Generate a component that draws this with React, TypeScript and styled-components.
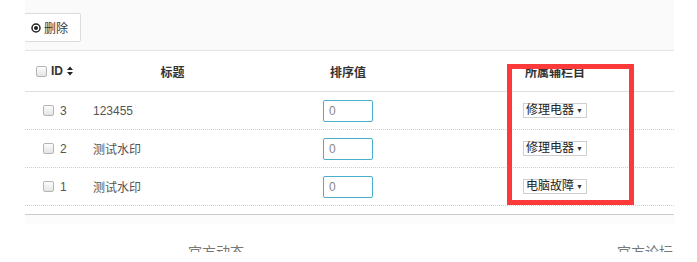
import React from 'react';
import styled, { createGlobalStyle } from 'styled-components';

const GlobalStyle = createGlobalStyle`
  body {
    margin: 0;
    background: #fff;
    font-family: "Liberation Sans", "Noto Sans CJK SC", sans-serif;
    color: #555;
  }
`;

const Page = styled.div`
  position: relative;
  width: 697px;
  height: 262px;
  overflow: hidden;
`;

const Panel = styled.div`
  margin: 0 23px 0 25px;
  overflow: hidden;
`;

const Toolbar = styled.div`
  height: 51px;
  background: #fafafa;
  border-bottom: 1px solid #e2e2e2;
  box-sizing: border-box;
  padding-top: 13px;
`;

const ActionButton = styled.button`
  display: flex;
  align-items: center;
  gap: 3px;
  margin-left: -1px;
  width: 57px;
  height: 29px;
  padding: 0 0 0 6px;
  background: #fff;
  border: 1px solid #dcdcdc;
  border-radius: 2px;
  font-family: inherit;
  font-size: 12px;
  color: #333;
`;

const columns = '60px 175px 176px 1fr';

const HeadRow = styled.div`
  display: grid;
  grid-template-columns: ${columns};
  height: 40px;
  align-items: center;
  border-bottom: 1px solid #dedede;
  font-size: 12px;
  font-weight: bold;
  color: #333;
`;

const HeadCell = styled.div<{ $pad?: number }>`
  display: flex;
  align-items: center;
  justify-content: ${p => (p.$pad !== undefined ? 'flex-start' : 'center')};
  padding-left: ${p => p.$pad ?? 0}px;
  gap: 4px;
`;

const Row = styled.div`
  display: grid;
  grid-template-columns: ${columns};
  height: 37px;
  align-items: center;
  border-bottom: 1px dotted #cfcfcf;
  font-size: 12px;
  color: #555;
`;

const Cell = styled.div<{ $pad: number }>`
  display: flex;
  align-items: center;
  gap: 6px;
  padding-left: ${p => p.$pad}px;
`;

const Check = styled.span`
  display: inline-block;
  width: 9px;
  height: 9px;
  border: 1px solid #b5b5b5;
  border-radius: 2px;
  background: linear-gradient(#fdfdfd, #e4e4e4);
`;

const SortInput = styled.input`
  width: 50px;
  height: 22px;
  box-sizing: border-box;
  border: 1px solid #4aaecd;
  border-radius: 2px;
  padding: 0 5px;
  font-family: inherit;
  font-size: 12px;
  color: #888;
  outline: none;
`;

const Select = styled.span`
  display: inline-flex;
  align-items: center;
  justify-content: space-between;
  width: 64px;
  height: 15px;
  box-sizing: border-box;
  padding: 0 3px 0 2px;
  border: 1px solid #cfcfcf;
  font-size: 12px;
  color: #222;
  line-height: 13px;
`;

const Arrow = styled.span`
  font-size: 7px;
  color: #333;
`;

const Bottom = styled.div`
  margin-top: 8px;
  height: 9px;
  border-top: 1px solid #cccccc;
  background: #fcfcfc;
`;

const Footer = styled.div`
  height: 28px;
  overflow: hidden;
  display: flex;
  padding-top: 20px;
  box-sizing: border-box;
  font-size: 14px;
  line-height: 16px;
  color: #777;
`;

const FooterLink = styled.span<{ $left: number }>`
  margin-left: ${p => p.$left}px;
`;

const Highlight = styled.div`
  position: absolute;
  left: 507px;
  top: 64px;
  width: 127px;
  height: 141px;
  box-sizing: border-box;
  border: 5px solid #fd3a3a;
  pointer-events: none;
`;

const DotCircle = () => (
  <svg width="10" height="10" viewBox="0 0 10 10">
    <circle cx="5" cy="5" r="4" fill="none" stroke="#222" strokeWidth="1.5" />
    <circle cx="5" cy="5" r="2" fill="#222" />
  </svg>
);

const SortIcon = () => (
  <svg width="6" height="10" viewBox="0 0 6 10">
    <path d="M0 4 L3 0.5 L6 4 Z M0 6 L3 9.5 L6 6 Z" fill="#222" />
  </svg>
);

const items = [
  { id: 3, title: '123455', column: '修理电器' },
  { id: 2, title: '测试水印', column: '修理电器' },
  { id: 1, title: '测试水印', column: '电脑故障' },
];

const App: React.FC = () => (
  <Page>
    <GlobalStyle />
    <Panel>
      <Toolbar>
        <ActionButton>
          <DotCircle />
          删除
        </ActionButton>
      </Toolbar>
      <HeadRow>
        <HeadCell $pad={11}>
          <Check />
          ID
          <SortIcon />
        </HeadCell>
        <HeadCell>标题</HeadCell>
        <HeadCell>排序值</HeadCell>
        <HeadCell>所属辅栏目</HeadCell>
      </HeadRow>
      {items.map(item => (
        <Row key={item.id}>
          <Cell $pad={18}>
            <Check />
            {item.id}
          </Cell>
          <Cell $pad={8}>{item.title}</Cell>
          <Cell $pad={63}>
            <SortInput defaultValue="0" />
          </Cell>
          <Cell $pad={87}>
            <Select>
              {item.column}
              <Arrow>▼</Arrow>
            </Select>
          </Cell>
        </Row>
      ))}
      <Bottom />
    </Panel>
    <Footer>
      <FooterLink $left={188}>官方动态</FooterLink>
      <FooterLink $left={373}>官方论坛</FooterLink>
    </Footer>
    <Highlight />
  </Page>
);

export default App;
